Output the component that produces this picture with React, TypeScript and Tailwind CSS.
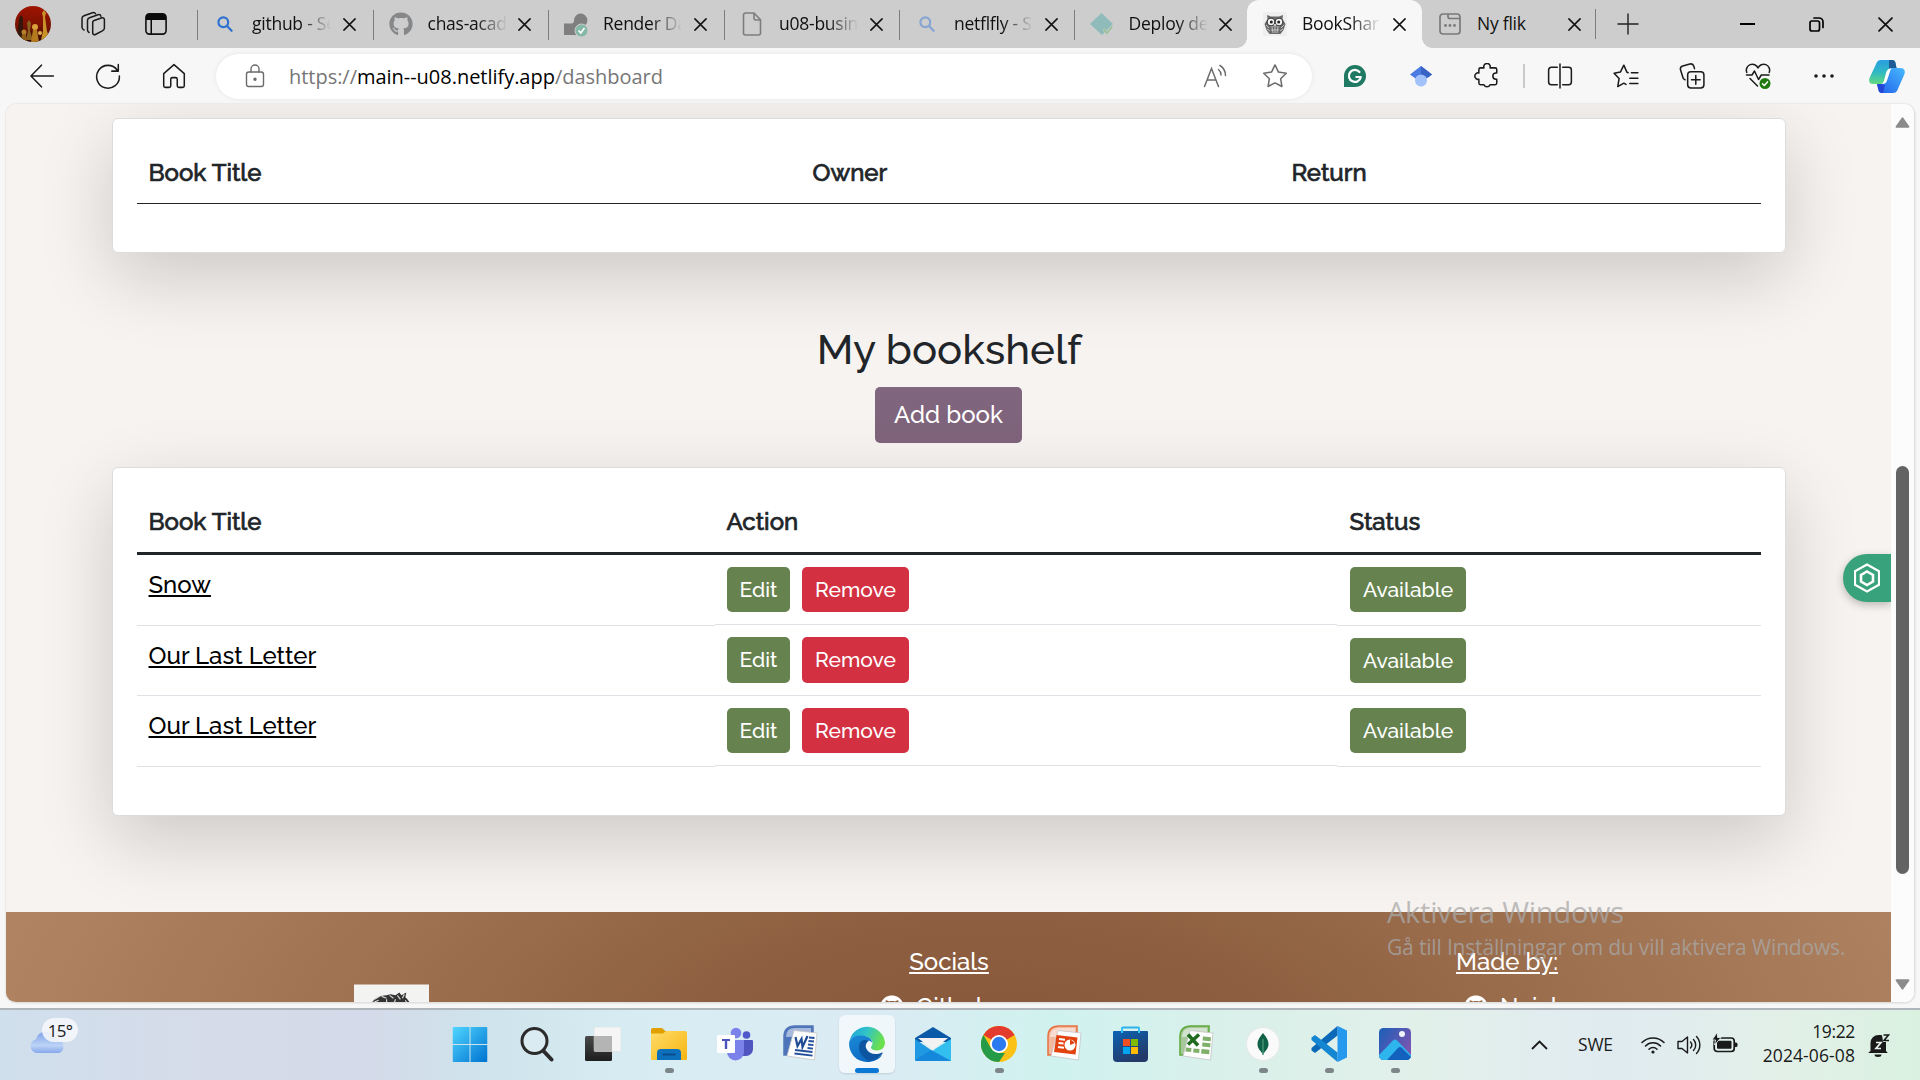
import type { ReactNode } from "react";
import { FaGithub } from "react-icons/fa";

const ui = "font-['Open_Sans',sans-serif]";

function Stroke({ size = 24, w = 1.4, className = "", children }: { size?: number; w?: number; className?: string; children: ReactNode }) {
  return (
    <svg width={size} height={size} viewBox="0 0 24 24" fill="none" stroke="currentColor" strokeWidth={w} strokeLinecap="round" strokeLinejoin="round" className={className}>
      {children}
    </svg>
  );
}

/* ---------- Tab strip ---------- */

function SearchFav({ color }: { color: string }) {
  return (
    <svg width="16" height="16" viewBox="0 0 16 16" fill="none" stroke={color} strokeWidth="2.2" strokeLinecap="round">
      <circle cx="6.3" cy="6.3" r="4.9" />
      <path d="M10 10l4.6 4.8" />
    </svg>
  );
}

function OwlFace({ size }: { size: number }) {
  return (
    <svg width={size} height={size} viewBox="0 0 24 24">
      <rect width="24" height="24" fill="#efefef" />
      <path d="M4 3l4 1.500h8L20 3l-.500 4 3 5-2 6-3 4H6.500l-3-4-2-6 3-5z" fill="#6a6a6a" />
      <path d="M3 13l3 3M4 17l3 2M21 13l-3 3M20 17l-3 2M9 15l1 6M12 15v6M15 15l-1 6M7 14l10 0M8 18h8" stroke="#c9c9c9" strokeWidth=".9" />
      <circle cx="8" cy="10" r="3.900" fill="#f4f4f4" stroke="#333" />
      <circle cx="16" cy="10" r="3.900" fill="#f4f4f4" stroke="#333" />
      <circle cx="8.300" cy="10" r="1.500" fill="#222" />
      <circle cx="15.700" cy="10" r="1.500" fill="#222" />
      <path d="M11 12h2l-1 2.500z" fill="#eee" />
    </svg>
  );
}

function CloseX({ size = 13 }: { size?: number }) {
  return (
    <svg width={size} height={size} viewBox="0 0 13 13" stroke="#111" strokeWidth="1.5" strokeLinecap="round">
      <path d="M.9.9l11.2 11.2M12.1.9L.9 12.1" />
    </svg>
  );
}

type TabProps = { icon: ReactNode; title: string; width: string; active?: boolean; divider?: boolean; fade?: boolean };

function Tab({ icon, title, width, active, divider = true, fade = true }: TabProps) {
  return (
    <div className={`relative flex h-12 shrink-0 items-center ${width} ${active ? "rounded-t-[12px] bg-[#f7f7f7]" : ""}`}>
      {divider && <div className="absolute left-0 top-[10px] h-[30px] w-px bg-[#7d7d7d]" />}
      {active && (
        <>
          <div className="absolute -left-[10px] bottom-0 size-[10px] bg-[radial-gradient(circle_at_0_0,#cdcdcd_9.5px,#f7f7f7_10px)]" />
          <div className="absolute -right-[10px] bottom-0 size-[10px] bg-[radial-gradient(circle_at_100%_0,#cdcdcd_9.5px,#f7f7f7_10px)]" />
        </>
      )}
      <div className="ml-[15px] flex w-[26px] shrink-0 justify-center">{icon}</div>
      <div className={`ml-[14px] w-[78px] shrink-0 overflow-hidden whitespace-nowrap pb-[2px] text-[17.5px] leading-6 tracking-[-0.25px] text-[#111] ${fade ? "[mask-image:linear-gradient(to_right,#000_48px,transparent_79px)]" : ""}`}>
        {title}
      </div>
      <div className="ml-[12.5px] flex pt-px">
        <CloseX />
      </div>
    </div>
  );
}

function TabStrip() {
  return (
    <div className="flex h-12 items-center bg-[#cdcdcd]">
      <div className="flex w-[197px] shrink-0 items-center">
        <svg className="ml-[15px]" width="36" height="36" viewBox="0 0 36 36">
          <defs>
            <clipPath id="av"><circle cx="18" cy="18" r="18" /></clipPath>
            <linearGradient id="avbg" x1="0" y1="0" x2="0" y2="1">
              <stop offset="0" stopColor="#a01400" />
              <stop offset=".55" stopColor="#7a1203" />
              <stop offset="1" stopColor="#2a0a02" />
            </linearGradient>
          </defs>
          <g clipPath="url(#av)">
            <rect width="36" height="36" fill="url(#avbg)" />
            <path d="M4 12l2-3 2 3v12l2 10H2z" fill="#35160a" />
            <path d="M14 14l2 3-1 8 3 9h-7l2-9-1-8z" fill="#8a6220" />
            <path d="M29 4l2 3-1 4 2 14 3 9H26l2-9 0-14-1-4z" fill="#c89228" />
            <circle cx="20" cy="21" r="3" fill="#d9a238" />
            <path d="M18 24h4l2 12h-8z" fill="#b47a1d" />
            <circle cx="9" cy="26" r="2.5" fill="#b5802a" />
            <path d="M7 28h4l1 8H6z" fill="#8f5f17" />
            <circle cx="25" cy="27" r="2" fill="#e0b050" />
          </g>
        </svg>
        <svg className="ml-[29px]" width="26" height="26" viewBox="0 0 26 26" fill="none" stroke="#1a1a1a" strokeWidth="1.5" strokeLinejoin="round" strokeLinecap="round">
          <path d="M13.500 9.800l8.500-3a1.800 1.800 0 012.400 1.700V17a3 3 0 01-2 2.800l-7 3.700a1.800 1.800 0 01-2.700-1.600V11.500a1.800 1.800 0 01.8-1.700z" />
          <path d="M9 21.500A3 3 0 017.500 19V9.500A3 3 0 019.500 6.700l8.500-3a2.400 2.400 0 013 1.500M4 19a3 3 0 01-2-2.700V7.500A3 3 0 014 4.700l8.500-3a2.400 2.400 0 013 .9" />
        </svg>
        <svg className="ml-[39px]" width="22" height="22" viewBox="0 0 22 22">
          <rect x=".9" y=".9" width="20.200" height="20.200" rx="3.500" fill="none" stroke="#111" strokeWidth="1.600" />
          <path d="M1 7V4a3 3 0 013-3h14a3 3 0 013 3v3zM5.500 6h1.500v15H5.500z" fill="#0a0a0a" />
        </svg>
      </div>
      <Tab width="w-[175.5px]" title="github - Search" icon={<SearchFav color="#2f72cf" />} />
      <Tab width="w-[175.5px]" title="chas-academy" icon={<FaGithub size={24} color="#858789" />} />
      <Tab width="w-[176px]" title="Render Dashboard" icon={
        <svg width="24" height="24" viewBox="0 0 24 24" className="mt-px">
          <path d="M0 10.500h7.500q2.500 0 2.500-3A6.700 6.700 0 1117 14q-3 0-3.500 3l-1.500 5H0z" fill="#7f7f7f" />
          <circle cx="17.500" cy="17.500" r="6.500" fill="#86b8a8" stroke="#cdcdcd" />
          <path d="M14.500 17.500l2.300 2.500L20.500 15" stroke="#fff" strokeWidth="1.600" fill="none" />
        </svg>} />
      <Tab width="w-[175px]" title="u08-business-idea" icon={
        <svg width="20" height="24" viewBox="0 0 20 24" fill="none" stroke="#7d7d7d" strokeWidth="1.600" strokeLinejoin="round">
          <path d="M3.500 1H12l6.500 6.800V21a2 2 0 01-2 2h-13a2 2 0 01-2-2V3a2 2 0 012-2z" />
          <path d="M12 1v5a2 2 0 002 2h4.500" />
        </svg>} />
      <Tab width="w-[174.5px]" title="netflfly - Search" icon={<SearchFav color="#86a5d3" />} />
      <Tab width="w-[173.5px]" title="Deploy details" icon={
        <svg width="24" height="24" viewBox="0 0 24 24">
          <path d="M11.500 1L23 12l-5 5-6 6L0 12z" fill="#8fbcba" />
          <path d="M13 18l4 4.500 6-7.500-1-1.500-5 6-2.500-3z" fill="#93bf8f" stroke="#cdcdcd" strokeWidth=".6" />
        </svg>} />
      <Tab width="w-[175px]" title="BookShare" active divider={false} icon={<OwlFace size={24} />} />
      <Tab width="w-[173px]" title="Ny flik" divider={false} fade={false} icon={
        <svg width="22" height="22" viewBox="0 0 22 22" fill="none" stroke="#7a7a7a" strokeWidth="1.700">
          <rect x="1" y="1" width="20" height="20" rx="3" />
          <path d="M9 1v2.500a2 2 0 002 2h10" />
          <g fill="#7a7a7a" stroke="none"><circle cx="6.500" cy="12.500" r="1.400" /><circle cx="11" cy="12.500" r="1.400" /><circle cx="15.500" cy="12.500" r="1.400" /></g>
        </svg>} />
      <div className="h-[30px] w-px bg-[#7d7d7d]" />
      <svg className="ml-[21px]" width="22" height="22" viewBox="0 0 22 22" stroke="#222" strokeWidth="1.400"><path d="M11 .5v21M.5 11h21" /></svg>
      <div className="ml-auto flex items-center">
        <div className="flex w-[69px] justify-center"><div className="h-[2px] w-[15px] bg-black" /></div>
        <div className="flex w-[69px] justify-center">
          <svg width="15" height="15" viewBox="0 0 15 15" fill="none" stroke="#000" strokeWidth="1.700">
            <rect x="1" y="4" width="9.500" height="10" rx="2" />
            <path d="M5 1h5a4 4 0 014 4v5.500" strokeLinecap="round" />
          </svg>
        </div>
        <div className="flex w-[69px] justify-center"><CloseX size={15} /></div>
      </div>
    </div>
  );
}

/* ---------- Toolbar ---------- */

function Slot({ children }: { children: ReactNode }) {
  return <div className="flex w-[66px] shrink-0 items-center justify-center">{children}</div>;
}

function Toolbar() {
  return (
    <div className="flex h-[56px] items-center bg-[#f7f7f7] text-[#1b1b1b]">
      <div className="ml-[9px] flex w-[207px]">
        <Slot><Stroke size={26}><path d="M22.500 12H2M11.500 2L1.800 12l9.700 10" /></Stroke></Slot>
        <Slot><Stroke size={26}><path d="M20.500 6.500A10.500 10.500 0 1022.500 12M21.500 1.500v6h-6" /></Stroke></Slot>
        <Slot><Stroke size={26}><path d="M2.500 9.800L12 1.500l9.500 8.300V21a1.500 1.500 0 01-1.500 1.500h-3.500A1.500 1.500 0 0115 21v-6a1.500 1.500 0 00-1.500-1.500h-3A1.500 1.500 0 009 15v6a1.500 1.500 0 01-1.500 1.500H4A1.500 1.500 0 012.500 21z" /></Stroke></Slot>
      </div>
      <div className="flex h-[45px] w-[1096px] shrink-0 items-center rounded-full bg-white text-[#6b6b6b] shadow-[0_0_5px_rgba(0,0,0,0.08)]">
        <Stroke size={24} className="ml-[27px]"><rect x="3.500" y="8" width="17" height="14.500" rx="2.200" /><path d="M8 8V5a4 4 0 018 0v3" /><circle cx="12" cy="15.200" r="1" fill="currentColor" /></Stroke>
        <div className="ml-[22px] whitespace-nowrap pt-px text-[20px] leading-7 tracking-[-0.030px] text-[#767676]">
          https://<span className="text-black">main--u08.netlify.app</span>/dashboard
        </div>
        <div className="ml-auto mr-[24px] flex items-center gap-[34px]">
          <svg width="25" height="25" viewBox="0 0 25 25" fill="none" stroke="#6b6b6b" strokeWidth="1.500" strokeLinecap="round"><path d="M1.500 22.500L8.500 4.500l7 18M4 16h9M15.500 5.500a7 7 0 012.500 5.500M17 1.500a12 12 0 015.500 10" /></svg>
          <Stroke size={26}><path d="M12 1.800l3.200 6.600 7.200 1-5.200 5.100 1.200 7.200L12 18.300l-6.400 3.400 1.200-7.200L1.600 9.400l7.200-1z" /></Stroke>
        </div>
      </div>
      <div className="ml-[10px] flex shrink-0 items-center">
        <Slot>
          <svg width="22" height="22" viewBox="0 0 22 22"><path d="M0 11A11 11 0 1111 22H0z" fill="#207a63" /><path d="M15.500 7a6 6 0 101.300 5h-4.500" fill="none" stroke="#fff" strokeWidth="2.200" strokeLinecap="round" strokeLinejoin="round" /></svg>
        </Slot>
        <Slot>
          <svg width="22" height="21" viewBox="0 0 22 21"><path d="M11 0l11 8.500-11 8-11-8z" fill="#4b7be0" /><path d="M11 0l11 8.500-4 3L11 9z" fill="#3862c4" /><circle cx="11" cy="14.500" r="6" fill="#a3c1fa" /></svg>
        </Slot>
        <Slot>
          <Stroke size={26}><path d="M4.500 6A1.500 1.500 0 016 4.500h3.200a3 3 0 115.600 0H19.500A1.500 1.500 0 0121 6v3.200h-.700a2.900 2.900 0 000 5.800h.700v3.500a1.500 1.500 0 01-1.500 1.500h-4.700a3 3 0 01-5.600 0H6a1.500 1.500 0 01-1.500-1.500V15a3 3 0 110-5.800z" /></Stroke>
        </Slot>
      </div>
      <div className="ml-[3px] h-6 w-[1.5px] bg-[#c9c9c9]" />
      <div className="ml-[2px] flex shrink-0 items-center">
        <Slot><Stroke size={26}><path d="M12 1v22M9.500 4H4a2.500 2.500 0 00-2.500 2.500v11A2.500 2.500 0 004 20h5.500M14.500 4H20a2.500 2.500 0 012.500 2.500v11A2.500 2.500 0 0120 20h-5.500" /></Stroke></Slot>
        <Slot><Stroke size={26}><path d="M14 9l-1.200-.600L10 2 6.800 8.400 1 9.400l4.600 5L4.400 21.800 10 18.600l2 1.200M17 9h6M15.500 14H23M15.500 19H23" /></Stroke></Slot>
        <Slot><Stroke size={26}><path d="M5.500 15.500A3 3 0 013.500 13L1.300 6A3 3 0 013.500 2.800L10 1a3 3 0 013.700 2l.6 2.200" /><rect x="8" y="8" width="15" height="15" rx="3" /><path d="M15.500 11.500v8M11.500 15.500h8" /></Stroke></Slot>
        <Slot>
          <svg width="26" height="26" viewBox="0 0 26 26" fill="none" stroke="#1b1b1b" strokeWidth="1.500" strokeLinecap="round" strokeLinejoin="round">
            <path d="M1.800 9.500A6 6 0 0113 5a6 6 0 0111.200 4.500M1.500 12h5.500l2.500-4 4 8.500 2.800-4.500H24M5 15.500l7.500 7.500" />
            <circle cx="20" cy="20.500" r="5.500" fill="#217a0f" stroke="none" /><path d="M17.500 20.700l1.800 1.800 3.200-3.600" stroke="#fff" />
          </svg>
        </Slot>
        <Slot>
          <svg width="20" height="4" viewBox="0 0 20 4" fill="#1b1b1b"><circle cx="2" cy="2" r="1.800" /><circle cx="10" cy="2" r="1.800" /><circle cx="18" cy="2" r="1.800" /></svg>
        </Slot>
      </div>
      <svg className="ml-[12px] shrink-0" width="36" height="33" viewBox="0 0 36 33">
        <defs>
          <linearGradient id="cpA" x1="0" y1="0" x2="0" y2="1"><stop offset="0" stopColor="#2a9fe0" /><stop offset=".5" stopColor="#2fb8c4" /><stop offset="1" stopColor="#63d97f" /></linearGradient>
          <linearGradient id="cpB" x1="0" y1="1" x2="1" y2="0"><stop offset="0" stopColor="#1f5fe8" /><stop offset="1" stopColor="#48b9ff" /></linearGradient>
        </defs>
        <path d="M8 2Q9 0 12 0h11q3 0 3.500 3l1 5h-5q-3 0-4 3l-3 9q-1 4-4 4H4q-5 0-3.500-6z" fill="url(#cpA)" />
        <path d="M20 0h3q3 0 3.500 3l1 5h-5q-1.500 0-2.500 1z" fill="#1d5a96" />
        <path d="M28 31q-1 2-4 2H13q-3 0-3.500-3L8 24h4q3 0 4-3l3-9q1-4 4-4h8q6 0 4.500 6z" fill="url(#cpB)" />
        <path d="M8 24h4l4 1-2 8h-1q-3 0-3.500-3z" fill="#2346d8" />
        <path d="M17 13q1-4.500 5.500-4.500l-1 1.500-3.500 10.500q-1 3.500-5 3.500 1.500-1 2-3z" fill="#fff" />
      </svg>
    </div>
  );
}

/* ---------- Page ---------- */

const shadowCard = "rounded-[6px] border border-[#dcdcde] bg-white shadow-[0_24px_72px_rgba(0,0,0,0.175)]";

/* Column headings are the medium cut thickened with a thin outline. */
const heading = "text-[24px] leading-9 text-[#212529] [-webkit-text-stroke:0.7px_#212529]";

const books = [
  { title: "Snow", row: "h-[71px]", action: "h-[70px] pt-[12px]", size: "h-[45px]" },
  { title: "Our Last Letter", row: "h-[70px]", action: "h-[70px] pt-[11px]", size: "h-[46px] pb-px" },
  { title: "Our Last Letter", row: "h-[71px]", action: "h-[70px] pt-[12px]", size: "h-[45px]" },
];

const chip = "flex items-center justify-center rounded-[5px] text-[21px] leading-none text-white";

function BookShelf() {
  return (
    <div className={`flex h-[349px] flex-col px-[24px] pt-[36px] ${shadowCard}`}>
      <div className={`grid grid-cols-[578px_622px_1fr] border-b-[3px] border-[#212529] pb-[12px] ${heading}`}>
        <div className="pl-[11.5px]">Book Title</div>
        <div className="pl-[11.5px]">Action</div>
        <div className="pl-[12.5px]">Status</div>
      </div>
      {books.map((b, i) => (
        <div key={i} className={`grid grid-cols-[578px_622px_1fr] items-start ${b.row}`}>
          <div className="h-full border-b border-[#dee2e6] pl-[11.5px] pt-[12px]">
            <span className="text-[24px] leading-9 text-black underline decoration-2 underline-offset-[2px]">{b.title}</span>
          </div>
          <div className={`flex gap-[12px] border-b border-[#dee2e6] pl-[12px] ${b.action}`}>
            <div className={`w-[63px] bg-[#66834f] ${b.size} ${chip}`}>Edit</div>
            <div className={`w-[107px] bg-[#d33142] ${b.size} ${chip}`}>Remove</div>
          </div>
          <div className="h-full border-b border-[#dee2e6] pl-[13px] pt-[12px]">
            <div className={`h-[45px] w-[116px] bg-[#66834f] ${chip}`}>Available</div>
          </div>
        </div>
      ))}
    </div>
  );
}

function Footer() {
  return (
    <div className="mt-[96px] h-[90px] overflow-hidden bg-[radial-gradient(ellipse_1000px_420px_at_52%_130px,#865739,#8e6041_30%,#b08462)] pl-[106px] pr-[105px] text-[24px] leading-9 text-white">
      <div className="grid grid-cols-3">
        <div className="flex justify-center pt-[72px]">
          <svg width="75" height="76" viewBox="0 0 76 76">
            <rect width="76" height="76" fill="#f3f3f1" />
            <path d="M17 20q5-9 16-9l4-1 5 1 4-3 2 3 5-3-1 5q5 4 6 10v30H17z" fill="#333" />
            <path d="M21 15l5-3M28 12l5 2M36 11l4 3M44 11l3 4M51 10l-2 4M20 18l5-2M33 15v3M42 15l-1 3M52 16l2 3" stroke="#d5d5d5" strokeWidth="1.200" />
          </svg>
        </div>
        <div className="pt-[32px]">
          <div className="text-center underline decoration-2 underline-offset-[2px]">Socials</div>
          <div className="flex items-center gap-[12px] pl-[210px] pt-[9px]"><FaGithub size={24} />Github</div>
        </div>
        <div className="pt-[32px]">
          <div className="text-center underline decoration-2 underline-offset-[2px]">Made by:</div>
          <div className="flex items-center gap-[12px] pl-[236px] pt-[9px]"><FaGithub size={24} />Najah</div>
        </div>
      </div>
    </div>
  );
}

function Page() {
  return (
    <div className="relative h-[898px] w-[1885px] shrink-0 overflow-hidden bg-[#f7f3f0] font-['Raleway','Lato',sans-serif] font-medium">
      <div className="pl-[106px] pr-[105px]">
        <div className={`mt-[14px] h-[135px] px-[24px] pt-[36px] ${shadowCard}`}>
          <div className={`grid grid-cols-[664px_479px_1fr] border-b border-[#212529] pb-[12px] ${heading}`}>
            <div className="pl-[11.5px]">Book Title</div>
            <div className="pl-[11.5px]">Owner</div>
            <div className="pl-[11.5px]">Return</div>
          </div>
        </div>
        <div className="relative flex flex-col items-center pb-[24px] pt-[70px]">
          <h2 className="pt-[2px] text-[42px] leading-[50px] text-[#212529]">My bookshelf</h2>
          <button className="mr-px mt-[12px] flex h-[56px] w-[147px] items-center justify-center rounded-[5px] bg-linear-to-b from-[#81667f] to-[#7d627a] pb-px text-[24px] text-white">Add book</button>
        </div>
        <BookShelf />
      </div>
      <Footer />
      <div className="absolute right-0 top-[450px] flex h-[48px] w-[48px] items-center rounded-l-full bg-[#37a27c] pl-[11px] shadow-[0_3px_8px_rgba(0,0,0,0.250)]">
        <svg width="26" height="30" viewBox="0 0 26 30" fill="none" stroke="#fff" strokeWidth="2.200"><path d="M13 1.500l12 6.800v13.400l-12 6.800-12-6.800V8.300z" /><path d="M13 8.500l6 3.500v6.500L13 22l-6-3.500V12z" strokeWidth="2.600" /></svg>
      </div>
    </div>
  );
}

function Scrollbar() {
  return (
    <div className="flex w-[23px] flex-col items-center bg-[#fcfcfc]">
      <svg className="mt-[13px]" width="15" height="11" viewBox="0 0 15 11"><path d="M7.500 1.200L13.500 9.800H1.500z" fill="#8b8b8b" stroke="#8b8b8b" strokeWidth="1.800" strokeLinejoin="round" /></svg>
      <div className="mt-[338px] h-[408px] w-[13px] rounded-full bg-[#636363]" />
      <svg className="mt-[105px]" width="15" height="11" viewBox="0 0 15 11"><path d="M7.500 9.800L13.500 1.200H1.500z" fill="#8b8b8b" stroke="#8b8b8b" strokeWidth="1.800" strokeLinejoin="round" /></svg>
    </div>
  );
}

/* ---------- Taskbar ---------- */

function AppSlot({ children, running, active }: { children: ReactNode; running?: boolean; active?: boolean }) {
  return (
    <div className="relative flex h-[70px] w-[66px] shrink-0 items-center justify-center">
      <div className={`flex h-[58px] w-[56px] -translate-y-px items-center justify-center rounded-[6px] ${active ? "bg-white/60 shadow-[0_1px_2px_rgba(0,0,0,0.120)]" : ""}`}>{children}</div>
      {running && <div className="absolute bottom-[7px] h-[5px] w-[9px] rounded-full bg-[#7d8688]" />}
      {active && <div className="absolute bottom-[7px] h-[5px] w-[24px] rounded-full bg-[#0a78d4]" />}
    </div>
  );
}

function OfficeDoc({ edge, tint, children }: { edge: string; tint: string; children: ReactNode }) {
  return (
    <svg width="36" height="36" viewBox="0 0 36 36" className="-translate-y-px">
      <path d="M1 12Q1 1 12 1h18v29H1z" fill={tint} stroke={edge} strokeWidth="1.500" />
      <path d="M3 12Q3 3 12 3h16v8z" fill="#fff" opacity=".5" />
      <path d="M11 5.500l23 2.500-2.500 27L4 31z" fill="#fdfdfd" stroke="#c4c4c4" strokeWidth=".8" />
      {children}
    </svg>
  );
}

function Apps() {
  return (
    <div className="ml-[360px] flex">
      <AppSlot>
        <svg width="35" height="35" viewBox="0 0 35 35" className="-translate-x-[1.500px]">
          <defs><linearGradient id="win" x1="0" y1="0" x2="1" y2="1"><stop offset="0" stopColor="#4fd6ff" /><stop offset="1" stopColor="#0072d0" /></linearGradient></defs>
          <path d="M1 0h16v17H0V1a1 1 0 011-1zM18 0h16a1 1 0 011 1v16H18zM0 18h17v17H1a1 1 0 01-1-1zM18 18h17v16a1 1 0 01-1 1H18z" fill="url(#win)" />
        </svg>
      </AppSlot>
      <AppSlot>
        <svg width="34" height="36" viewBox="0 0 34 36" fill="none" stroke="#2b2b2b"><circle cx="14.500" cy="15" r="12.500" strokeWidth="3" fill="#fff" fillOpacity=".2" /><path d="M23.500 25l8 8.500" strokeWidth="4" strokeLinecap="round" /></svg>
      </AppSlot>
      <AppSlot>
        <svg width="36" height="34" viewBox="0 0 36 34"><defs><linearGradient id="tv" x1="0" y1="0" x2="0" y2="1"><stop offset="0" stopColor="#4a4a4a" /><stop offset="1" stopColor="#1e1e1e" /></linearGradient></defs><rect y="9" width="27" height="25" rx="1.500" fill="url(#tv)" /><rect x="9" width="27" height="24.500" rx="1.500" fill="#f5f5f5" stroke="#ddd" strokeWidth=".5" /><path d="M9 9h18v15.500H9z" fill="#b4b4b4" /></svg>
      </AppSlot>
      <AppSlot running>
        <svg width="36" height="34" viewBox="0 0 36 34"><defs><linearGradient id="fe" x1="0" y1="0" x2="1" y2="1"><stop offset="0" stopColor="#ffdc6b" /><stop offset="1" stopColor="#f6b40e" /></linearGradient></defs><path d="M0 3a2 2 0 012-2h9l4 3.500V9H0z" fill="#dfa000" /><path d="M0 6.500h12l3-2.500h19a2 2 0 012 2v26a1 1 0 01-1 1H1a1 1 0 01-1-1z" fill="url(#fe)" /><path d="M6 33v-7a4 4 0 014-4h16a4 4 0 014 4v7z" fill="#0c70bd" /><path d="M11.500 27.500h13" stroke="#0b4a86" strokeWidth="1.800" /></svg>
      </AppSlot>
      <AppSlot>
        <svg width="36" height="34" viewBox="0 0 36 34"><circle cx="29.500" cy="8" r="3.800" fill="#5059c9" /><path d="M24 13h11a1 1 0 011 1v8a7 7 0 01-7 7h-5z" fill="#4f55c0" /><circle cx="19" cy="6" r="5.300" fill="#7b83eb" /><path d="M10 13h17v12a8.500 8.500 0 01-17 0z" fill="#7b83eb" /><rect y="8" width="18" height="18" rx="1" fill="#fff" /><path d="M5 12h8v2h-2.800v8H7.800v-8H5z" fill="#4b53bc" /></svg>
      </AppSlot>
      <AppSlot>
        <OfficeDoc edge="#5277b8" tint="#4d74bb">
          <path d="M12.500 12l2 9 4-7 1 8 5-11" stroke="#1f4a94" strokeWidth="2.200" fill="none" />
          <path d="M26 12.500l5.500.5M25.500 16l5.500.5M25 19.500l5.500.6M24.500 23l5.500.6M12 25l17.500 2M11.500 28.500l18 2.200" stroke="#24509d" strokeWidth="1.800" />
        </OfficeDoc>
      </AppSlot>
      <AppSlot active>
        <svg width="36" height="36" viewBox="0 0 36 36">
          <defs>
            <linearGradient id="eg1" x1="0" y1="0" x2="1" y2=".3"><stop offset="0" stopColor="#1f9fe0" /><stop offset=".5" stopColor="#2fc3c8" /><stop offset="1" stopColor="#6be04e" /></linearGradient>
            <linearGradient id="eg2" x1="0" y1="0" x2=".6" y2="1"><stop offset="0" stopColor="#1b8ad8" /><stop offset="1" stopColor="#0c67c0" /></linearGradient>
          </defs>
          <path d="M.500 15A18 18 0 0136 16.500c0 5-3.500 8-8 8-4 0-6-1.500-6-3 0-1 1.500-2 1.500-4.500 0-4-4.500-7-10-7C6 10 1.500 12.500.500 15z" fill="url(#eg1)" />
          <path d="M.200 16C1.500 12 6 9.500 12 9.500c6 0 11 3 11.200 7-2-2-5-2.200-7-1C11 19 13.500 29 22 31.500 30 33 33 29 33.500 28.500 30 34 24 36 18.500 36A18 18 0 01.200 16z" fill="url(#eg2)" />
          <path d="M12 15.500c-5 7 0 16.500 9 19.300C27 34 31.500 31 33.700 27c.2-.5-.3-.7-.7-.5-6 3-13 1.500-15.500-3.500C15.500 19 18 15.500 20 15c-3-1.500-6-1-8 .5z" fill="#0d55a0" />
        </svg>
      </AppSlot>
      <AppSlot>
        <svg width="36" height="34" viewBox="0 0 36 34"><path d="M0 11L18 0l18 11v4H0z" fill="#0b5aa8" /><path d="M3 11h30L18 23z" fill="#f2f2f2" /><path d="M36 12v21a1 1 0 01-1 1H6L20 22z" fill="#32bff0" /><path d="M0 33V12l16 11 20 11H1z" fill="#1f9ae2" /><path d="M0 33l16-10 20 11H1z" fill="#1588dc" /></svg>
      </AppSlot>
      <AppSlot running>
        <svg width="36" height="36" viewBox="0 0 36 36"><circle cx="18" cy="18" r="18" fill="#fbc116" /><path d="M18 18L2.400 9A18 18 0 0133.600 9z" fill="#e33b2e" /><path d="M2.400 9l7.800 13.500L18 27h6l-6 9A18 18 0 012.400 9z" fill="#259b47" /><circle cx="18" cy="18" r="9" fill="#fff" /><circle cx="18" cy="18" r="7.200" fill="#2c7af0" /></svg>
      </AppSlot>
      <AppSlot>
        <OfficeDoc edge="#e8703f" tint="#f3b8a0">
          <path d="M9.500 10l21 2.500-2 17L7 27z" fill="#e2420f" />
          <path d="M12 14l6 .7M11.500 18l5 .5M11 22l6 .7" stroke="#fff" strokeWidth="2" /><circle cx="23" cy="20" r="5.500" fill="#fff" /><path d="M23 20V14l5 4z" fill="#e2420f" />
        </OfficeDoc>
      </AppSlot>
      <AppSlot>
        <svg width="35" height="36" viewBox="0 0 35 36" className="-translate-x-px"><defs><linearGradient id="st" x1="0" y1="0" x2=".5" y2="1"><stop offset="0" stopColor="#0b63b5" /><stop offset="1" stopColor="#243a68" /></linearGradient></defs><path d="M9 8V2.500A1 1 0 0110 1.500h15a1 1 0 011 1V8" fill="none" stroke="#2fb2ec" strokeWidth="2" /><path d="M0 6a1 1 0 011-1h33a1 1 0 011 1v26a4 4 0 01-4 4H4a4 4 0 01-4-4z" fill="url(#st)" /><path d="M9 1.500V7M26 1.500V7" stroke="#35c0f5" strokeWidth="2" /><path fill="#f25022" d="M10 13h7v7h-7z" /><path fill="#7fba00" d="M18 13h7v7h-7z" /><path fill="#00a4ef" d="M10 21h7v7h-7z" /><path fill="#ffb900" d="M18 21h7v7h-7z" /></svg>
      </AppSlot>
      <AppSlot>
        <OfficeDoc edge="#5fa83a" tint="#a5c79a">
          <path d="M24 11.500l8 .8-.4 4-8-.8zM23.500 17.500l8 .8-.4 4-8-.8zM22.500 24l8 .8-.4 4.500-8-.8zM14.500 23.500l6 .6-.3 4-6-.6zM7 22.500l5.500.6-.4 4-5.600-.6z" fill="#7fb069" />
          <path d="M9 9.500l10 11M20 9.500l-11 10" stroke="#1e6b1f" strokeWidth="3.500" />
        </OfficeDoc>
      </AppSlot>
      <AppSlot running>
        <svg width="34" height="34" viewBox="0 0 34 34"><circle cx="17" cy="17" r="16.500" fill="#fafafa" stroke="#e4e9e7" /><path d="M17 6c3.500 4 5.500 7.500 5.500 11 0 4-2.500 6.500-5 9.500V28h-1v-1.500c-2.500-3-5-5.500-5-9.500 0-3.500 2-7 5.500-11z" fill="#116149" /><path d="M17 12v16" stroke="#5aa887" strokeWidth="1" /></svg>
      </AppSlot>
      <AppSlot running>
        <svg width="36" height="36" viewBox="0 0 36 36"><path d="M26.500 0L36 4.500v27L26.500 36z" fill="#2499ed" /><path d="M26.500 0v9.500L4 27 .500 24.500v-2.500z" fill="#0b69b8" /><path d="M26.500 36v-9.500L4 9 .500 11.500V14z" fill="#1486d2" /></svg>
      </AppSlot>
      <AppSlot running>
        <svg width="32" height="32" viewBox="0 0 32 32"><defs><linearGradient id="ph" x1="0" y1="0" x2="1" y2=".6"><stop offset="0" stopColor="#1a5fb8" /><stop offset="1" stopColor="#7a56b0" /></linearGradient><clipPath id="phc"><rect width="32" height="32" rx="4.500" /></clipPath></defs><g clipPath="url(#phc)"><rect width="32" height="32" fill="url(#ph)" /><path d="M0 32V27L14 12.500q2-2 4 0L32 27v5z" fill="#2fb5ee" /><path d="M8 32L19 20q2-2 4 0l9 9v3z" fill="#1262bd" /></g><circle cx="23" cy="6" r="3" fill="#f0f4fa" /></svg>
      </AppSlot>
    </div>
  );
}

function Taskbar() {
  return (
    <div className="flex h-[72px] items-center border-t-2 border-[#aeb6bb] bg-[linear-gradient(to_right,#d0dfec_0%,#d6dbe9_12%,#d4dae9_19%,#cfe3ec_25%,#d8edf3_34%,#dbebf4_45%,#d0f2ef_55%,#daf0ea_64%,#e2f0ea_74%,#e0ebf0_84%,#e2f0e8_93%,#daf1e0_100%)] text-[#1a1a1a]">
      <div className="relative h-[70px] w-[78px] shrink-0">
        <svg className="absolute left-[30px] top-[18px]" width="36" height="26" viewBox="0 0 36 26"><defs><linearGradient id="cl" x1="0" y1="0" x2="0" y2="1"><stop offset="0" stopColor="#7fa3ea" /><stop offset=".65" stopColor="#bcd3f5" /><stop offset="1" stopColor="#86a8ec" /></linearGradient></defs><path d="M7 25a7 7 0 01-1-13.800A10 10 0 0124 8a7 7 0 014 4 6.800 6.800 0 011 13z" fill="url(#cl)" /></svg>
        <div className="absolute left-[42px] top-[8px] flex h-[24px] w-[36px] items-center justify-center rounded-full bg-[#f4f7fb]/90 text-[17px] leading-none tracking-[-0.800px]">15°</div>
      </div>
      <Apps />
      <svg className="ml-[103px] shrink-0" width="17" height="10" viewBox="0 0 17 10" fill="none" stroke="#1a1a1a" strokeWidth="1.800"><path d="M1 9l7.500-7.500L16 9" /></svg>
      <div className="ml-[30px] w-[36px] shrink-0 pb-px text-[17.5px] tracking-[-0.200px]">SWE</div>
      <svg className="ml-[27px] shrink-0" width="24" height="18" viewBox="0 0 24 18" fill="none" stroke="#1a1a1a" strokeWidth="1.500" strokeLinecap="round"><path d="M1 6.500a15.500 15.500 0 0122 0M4.500 10a10.500 10.500 0 0115 0M8 13.200a5.600 5.600 0 018 0" /><circle cx="12" cy="16" r="1.600" fill="#1a1a1a" stroke="none" /></svg>
      <svg className="ml-[12px] shrink-0" width="25" height="20" viewBox="0 0 25 20" fill="none" stroke="#1a1a1a" strokeWidth="1.400" strokeLinecap="round" strokeLinejoin="round"><path d="M1 6.500h4L10.500 2v16L5 13.500H1zM13.500 7a4.500 4.500 0 010 6M16.500 4.500a8 8 0 010 11M19.500 1.500a12.500 12.500 0 010 17" /></svg>
      <svg className="-mt-[5px] ml-[10px] shrink-0" width="26" height="21" viewBox="0 0 26 21"><rect x="2.200" y="6" width="20" height="13.500" rx="3" fill="none" stroke="#1a1a1a" strokeWidth="1.700" /><rect x="5" y="8.800" width="14.500" height="8" rx="1" fill="#1a1a1a" /><path d="M23 10.500h1a1.500 1.500 0 011.500 1.500v1.500A1.500 1.500 0 0124 15h-1z" fill="#1a1a1a" /><path d="M5.500 0L0 8h3.500L2.500 13 9 5.500H5.500z" fill="#1a1a1a" stroke="#e2edee" strokeWidth=".9" /></svg>
      <div className="ml-auto mr-[65px] pb-[5px] text-right text-[17.500px] leading-6">
        <div className="tracking-[-0.350px]">19:22</div>
        <div className="tracking-[0.100px]">2024-06-08</div>
      </div>
      <svg className="absolute right-[30px] -mt-px" width="22" height="24" viewBox="0 0 22 24"><path d="M2.500 18v-8A8 8 0 0110.500 2h3L18 8v10l1.500 1.500v.500H.500v-.500zM6.500 21.500h7a3.500 2.500 0 01-7 0z" fill="#1a1a1a" /><path d="M14 1h8v8h-7z" fill="#dff0e4" /><path d="M15.500 2h5L16 7.500h5" fill="none" stroke="#1a1a1a" strokeWidth="1.600" /><path d="M8 9.500h5L8 15.500h5" fill="none" stroke="#e6f2ea" strokeWidth="1.700" /></svg>
    </div>
  );
}

export default function App() {
  return (
    <div className={`relative flex h-[1080px] w-[1920px] flex-col overflow-hidden bg-[#f7f7f7] ${ui}`}>
      <TabStrip />
      <Toolbar />
      <div className="flex h-[904px] pl-[6px]">
        <div className="flex h-[899px] w-[1909px] overflow-hidden rounded-[10px] border-b border-r border-[#dfe1e1] shadow-[0_0_2px_rgba(0,0,0,0.180)]">
          <Page />
          <Scrollbar />
        </div>
      </div>
      <Taskbar />
      <div className="absolute left-[1387px] top-[892px] whitespace-nowrap text-[#a9a9a9]/75">
        <div className="text-[29px] leading-[40px] tracking-[-0.250px]">Aktivera Windows</div>
        <div className="text-[21px] leading-[30px] tracking-[-0.170px]">Gå till Inställningar om du vill aktivera Windows.</div>
      </div>
    </div>
  );
}
